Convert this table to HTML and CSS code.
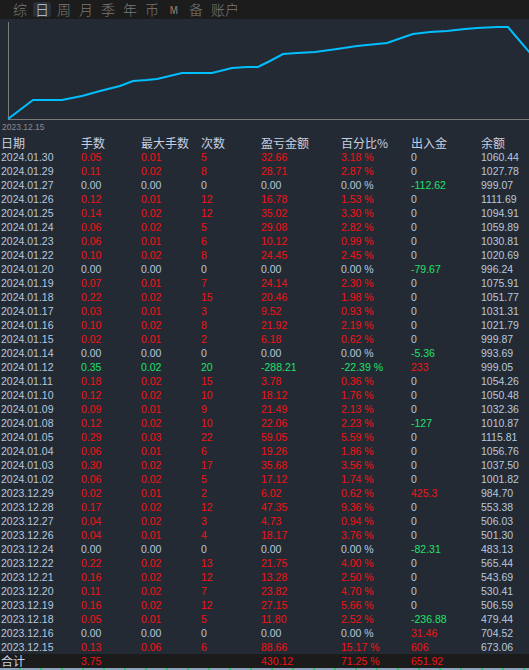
FILE: index.html
```html
<!DOCTYPE html>
<html lang="zh-CN">
<head>
  <meta charset="UTF-8" />
  <meta name="viewport" content="width=device-width, initial-scale=1.0"/>
  <title>日报表</title>
  <link rel="stylesheet" href="styles.css">
</head>
<body>
  <div class="tab-bar">
    <span class="tab">综</span>
    <span class="tab active">日</span>
    <span class="tab">周</span>
    <span class="tab">月</span>
    <span class="tab">季</span>
    <span class="tab">年</span>
    <span class="tab">币</span>
    <span class="tab tab-icon"><span class="m-icon">M</span></span>
    <span class="tab">备</span>
    <span class="tab">账户</span>
  </div>

  <div class="chart">
    <svg width="529" height="102" viewBox="0 0 529 102">
      <line x1="8.5" y1="3" x2="8.5" y2="101" class="axis" />
      <line x1="8" y1="100.5" x2="529" y2="100.5" class="axis" />
      <polyline class="equity" points="8,100 33,81 62,81 82,77 100,72 120,67 133,62 147,61 157,60 182,54 212,54 232,49 247,48 258,48 270,42 283,35 297,34 315,33 337,30 357,27 377,25 387,24 407,17 413,15 430,13 447,12 465,10 477,9 497,8 508,8 513,14 531,35" />
    </svg>
    <div class="chart-date">2023.12.15</div>
  </div>

  <div class="report">
    <div class="row head">
      <span>日期</span><span>手数</span><span>最大手数</span><span>次数</span>
      <span>盈亏金额</span><span>百分比%</span><span>出入金</span><span>余额</span>
    </div>
    <div id="rows"></div>
    <div class="row total">
      <span class="label">合计</span><span class="up">3.75</span><span></span><span></span>
      <span class="up">430.12</span><span class="up">71.25 %</span><span class="up">651.92</span><span></span>
    </div>
    <div class="bottom-line"></div>
  </div>

  <script>
    const data = [
      ['2024.01.30', '0.05', '0.01', '5', '32.66', '3.18 %', '0', '1060.44'],
      ['2024.01.29', '0.11', '0.02', '8', '28.71', '2.87 %', '0', '1027.78'],
      ['2024.01.27', '0.00', '0.00', '0', '0.00', '0.00 %', '-112.62', '999.07'],
      ['2024.01.26', '0.12', '0.01', '12', '16.78', '1.53 %', '0', '1111.69'],
      ['2024.01.25', '0.14', '0.02', '12', '35.02', '3.30 %', '0', '1094.91'],
      ['2024.01.24', '0.06', '0.02', '5', '29.08', '2.82 %', '0', '1059.89'],
      ['2024.01.23', '0.06', '0.01', '6', '10.12', '0.99 %', '0', '1030.81'],
      ['2024.01.22', '0.10', '0.02', '8', '24.45', '2.45 %', '0', '1020.69'],
      ['2024.01.20', '0.00', '0.00', '0', '0.00', '0.00 %', '-79.67', '996.24'],
      ['2024.01.19', '0.07', '0.01', '7', '24.14', '2.30 %', '0', '1075.91'],
      ['2024.01.18', '0.22', '0.02', '15', '20.46', '1.98 %', '0', '1051.77'],
      ['2024.01.17', '0.03', '0.01', '3', '9.52', '0.93 %', '0', '1031.31'],
      ['2024.01.16', '0.10', '0.02', '8', '21.92', '2.19 %', '0', '1021.79'],
      ['2024.01.15', '0.02', '0.01', '2', '6.18', '0.62 %', '0', '999.87'],
      ['2024.01.14', '0.00', '0.00', '0', '0.00', '0.00 %', '-5.36', '993.69'],
      ['2024.01.12', '0.35', '0.02', '20', '-288.21', '-22.39 %', '233', '999.05'],
      ['2024.01.11', '0.18', '0.02', '15', '3.78', '0.36 %', '0', '1054.26'],
      ['2024.01.10', '0.12', '0.02', '10', '18.12', '1.76 %', '0', '1050.48'],
      ['2024.01.09', '0.09', '0.01', '9', '21.49', '2.13 %', '0', '1032.36'],
      ['2024.01.08', '0.12', '0.02', '10', '22.06', '2.23 %', '-127', '1010.87'],
      ['2024.01.05', '0.29', '0.03', '22', '59.05', '5.59 %', '0', '1115.81'],
      ['2024.01.04', '0.06', '0.01', '6', '19.26', '1.86 %', '0', '1056.76'],
      ['2024.01.03', '0.30', '0.02', '17', '35.68', '3.56 %', '0', '1037.50'],
      ['2024.01.02', '0.06', '0.02', '5', '17.12', '1.74 %', '0', '1001.82'],
      ['2023.12.29', '0.02', '0.01', '2', '6.02', '0.62 %', '425.3', '984.70'],
      ['2023.12.28', '0.17', '0.02', '12', '47.35', '9.36 %', '0', '553.38'],
      ['2023.12.27', '0.04', '0.02', '3', '4.73', '0.94 %', '0', '506.03'],
      ['2023.12.26', '0.04', '0.01', '4', '18.17', '3.76 %', '0', '501.30'],
      ['2023.12.24', '0.00', '0.00', '0', '0.00', '0.00 %', '-82.31', '483.13'],
      ['2023.12.22', '0.22', '0.02', '13', '21.75', '4.00 %', '0', '565.44'],
      ['2023.12.21', '0.16', '0.02', '12', '13.28', '2.50 %', '0', '543.69'],
      ['2023.12.20', '0.11', '0.02', '7', '23.82', '4.70 %', '0', '530.41'],
      ['2023.12.19', '0.16', '0.02', '12', '27.15', '5.66 %', '0', '506.59'],
      ['2023.12.18', '0.05', '0.01', '5', '11.80', '2.52 %', '-236.88', '479.44'],
      ['2023.12.16', '0.00', '0.00', '0', '0.00', '0.00 %', '31.46', '704.52'],
      ['2023.12.15', '0.13', '0.06', '6', '88.66', '15.17 %', '606', '673.06']
    ];

    const rowsBox = document.getElementById('rows');

    function signClass(value) {
      const n = parseFloat(value);
      if (n > 0) return 'up';
      if (n < 0) return 'down';
      return '';
    }

    data.forEach(r => {
      const row = document.createElement('div');
      row.className = 'row';
      const pnlClass = signClass(r[4]);
      r.forEach((text, i) => {
        const cell = document.createElement('span');
        if (i >= 1 && i <= 5) cell.className = pnlClass;
        if (i === 6) cell.className = signClass(text);
        cell.textContent = text;
        row.appendChild(cell);
      });
      rowsBox.appendChild(row);
    });
  </script>
</body>
</html>
```

FILE: styles.css
```css
body {
  margin: 0;
  background-color: #242a33;
  color: #b6c8df;
  font-family: "Liberation Sans", Arial, "Noto Sans CJK SC", sans-serif;
  overflow: hidden;
}

.tab-bar {
  height: 19px;
  background-color: #1c1c1c;
  display: flex;
  align-items: center;
  gap: 4px;
  padding-left: 11px;
}

.tab {
  font-family: "Noto Sans CJK SC", sans-serif;
  font-size: 14px;
  font-weight: 300;
  line-height: 15px;
  padding: 0 2px;
  color: #7a7a7a;
  border-radius: 3px;
}

.tab.active {
  background-color: #28303b;
  color: #c3cfe1;
}

.tab-icon {
  width: 14px;
  text-align: center;
}

.m-icon {
  font-family: "Liberation Sans", sans-serif;
  font-size: 10px;
  font-weight: bold;
  background: linear-gradient(90deg, #b04040 0%, #6a8a5a 50%, #4a6aa0 100%);
  -webkit-background-clip: text;
  background-clip: text;
  color: transparent;
}

.chart svg {
  display: block;
}

.axis {
  stroke: #7a7a7a;
  stroke-width: 1;
}

.equity {
  fill: none;
  stroke: #00bfff;
  stroke-width: 2;
  stroke-linejoin: miter;
}

.chart-date {
  height: 15px;
  line-height: 12px;
  padding-left: 2px;
  font-size: 8.5px;
  color: #858b93;
}

.row {
  display: grid;
  grid-template-columns: 80px 60px 60px 60px 80px 70px 70px 1fr;
  height: 14px;
  line-height: 14px;
  padding-left: 1px;
  font-size: 10.5px;
  white-space: nowrap;
}

.row.head {
  font-size: 12px;
  color: #c4d0e2;
}

.row.head span,
.total .label {
  font-family: "Noto Sans CJK SC", sans-serif;
}

.total {
  background-color: #1b1b1b;
}

.total .label {
  font-size: 12px;
  color: #c4d0e2;
}

.up {
  color: #f01414;
}

.down {
  color: #1fe06b;
}

.bottom-line {
  height: 2px;
  background: repeating-linear-gradient(90deg, #8ea3bb 0 19px, #2fc563 19px 21px);
}
```
